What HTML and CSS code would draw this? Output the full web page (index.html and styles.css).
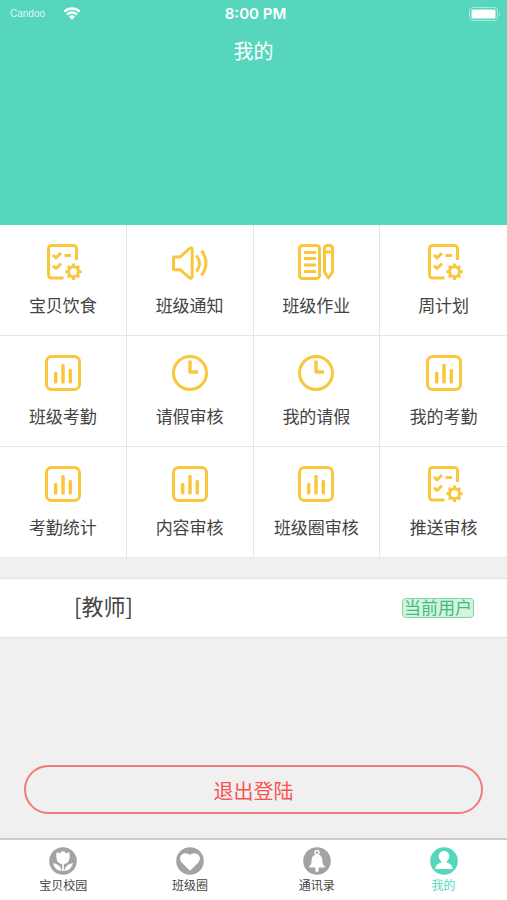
FILE: index.html
```html
<!DOCTYPE html>
<html lang="zh-CN">
<head>
<meta charset="utf-8">
<meta name="viewport" content="width=device-width, initial-scale=1">
<title>我的</title>
<link rel="stylesheet" href="styles.css">
</head>
<body>
<svg class="defs" aria-hidden="true">
  <symbol id="list-gear" viewBox="0 0 36 36">
    <path d="M18.500 34H6.500a3 3 0 0 1-3-3V4.500a3 3 0 0 1 3-3H28.500a3 3 0 0 1 3 3V16M8 11l3 2.800 5-4.800M19.500 11.500h6.500M8 21.700l3 2.800 5-4.800"/>
    <circle cx="28.500" cy="27.700" r="5"/>
    <path class="teeth" d="M28.500 21.700v-2.200M28.500 33.700v2.200M22.500 27.700h-2.200M34.500 27.700h2.200M24.300 23.500l-1.500-1.500M32.700 31.900l1.500 1.500M24.300 31.900l-1.500 1.500M32.700 23.500l1.500-1.500"/>
  </symbol>
  <symbol id="speaker" viewBox="0 0 36 36">
    <path d="M1.500 13.500q0-.5.500-.5H8L17 5q3.200-2.800 3.200 1V32q0 3.800-3.200 1.300L8 25.700H2q-.5 0-.5-.5zM24.300 11.500q6.500 8 0 16M29.500 6.500q9 12.500 0 25"/>
  </symbol>
  <symbol id="notebook" viewBox="0 0 36 36">
    <rect x="1.500" y="1.500" width="20" height="33" rx="3"/>
    <path d="M6 8.500h12M6 14.500h12M6 21h12M6 27.500h12M26.500 4.500q0-3 3-3h2q3 0 3 3V28l-4 6-4-6zM26.500 8h8"/>
  </symbol>
  <symbol id="chart" viewBox="0 0 36 36">
    <rect x="1.500" y="1.500" width="33" height="33" rx="5"/>
    <path class="bars" d="M10.700 18.500V27M18 10.500V27M25.300 15.500V27"/>
  </symbol>
  <symbol id="clock" viewBox="0 0 36 36">
    <circle cx="18" cy="18" r="16.500"/>
    <path class="hands" d="M18 5.500V17h8"/>
  </symbol>
</svg>

<header class="hero">
  <div class="status">
    <div class="signal">
      <span class="carrier">Candoo</span>
      <svg class="wifi" viewBox="0 0 18 13" aria-hidden="true">
        <path d="M1.200 4.500a11.500 11.500 0 0 1 15.600 0M4 7.500a7.300 7.300 0 0 1 10 0"/>
        <path class="dot" d="M6 9.600a4.500 4.500 0 0 1 6 0L9 12.700z"/>
      </svg>
    </div>
    <span class="time">8:00 PM</span>
    <svg class="battery" viewBox="0 0 32 14" aria-hidden="true">
      <rect class="shell" x="0.500" y="0.500" width="28" height="13" rx="3.500"/>
      <rect class="charge" x="2.500" y="2.500" width="24" height="9" rx="1.500"/>
      <path class="cap" d="M30 5q2 2 0 4z"/>
    </svg>
  </div>
  <h1 class="title">我的</h1>
</header>

<main class="main">
  <nav class="grid" aria-label="功能">
    <a class="cell" href="#"><svg class="icon"><use href="#list-gear"/></svg><span>宝贝饮食</span></a>
    <a class="cell" href="#"><svg class="icon"><use href="#speaker"/></svg><span>班级通知</span></a>
    <a class="cell" href="#"><svg class="icon"><use href="#notebook"/></svg><span>班级作业</span></a>
    <a class="cell" href="#"><svg class="icon"><use href="#list-gear"/></svg><span>周计划</span></a>
    <a class="cell" href="#"><svg class="icon"><use href="#chart"/></svg><span>班级考勤</span></a>
    <a class="cell" href="#"><svg class="icon"><use href="#clock"/></svg><span>请假审核</span></a>
    <a class="cell" href="#"><svg class="icon"><use href="#clock"/></svg><span>我的请假</span></a>
    <a class="cell" href="#"><svg class="icon"><use href="#chart"/></svg><span>我的考勤</span></a>
    <a class="cell" href="#"><svg class="icon"><use href="#chart"/></svg><span>考勤统计</span></a>
    <a class="cell" href="#"><svg class="icon"><use href="#chart"/></svg><span>内容审核</span></a>
    <a class="cell" href="#"><svg class="icon"><use href="#chart"/></svg><span>班级圈审核</span></a>
    <a class="cell" href="#"><svg class="icon"><use href="#list-gear"/></svg><span>推送审核</span></a>
  </nav>

  <section class="user">
    <span class="role">[教师]</span>
    <span class="tag">当前用户</span>
  </section>

  <button class="logout" type="button">退出登陆</button>
</main>

<nav class="tabs" aria-label="主导航">
  <a class="tab" href="#">
    <svg class="tab-icon" viewBox="0 0 28 28" aria-hidden="true">
      <circle cx="14" cy="14" r="13.800"/>
      <path class="cut" d="M7.500 5.500q2-.5 3.500 1Q12 4.200 14 4.200t3 2.300q1.500-1.500 3.500-1 .8 5.500-.7 8.500-1.500 2.800-5 3.200V24h-1.600v-6.800Q9.700 16.800 8.200 14 6.700 11 7.500 5.500zM4 16q7.300 1 8.800 8Q5.500 23.500 4 16zM24 16q-7.300 1-8.800 8Q22.500 23.500 24 16z"/>
    </svg>
    <span>宝贝校园</span>
  </a>
  <a class="tab" href="#">
    <svg class="tab-icon" viewBox="0 0 28 28" aria-hidden="true">
      <circle cx="14" cy="14" r="13.800"/>
      <path class="cut" d="M14 23.800L5.700 15.500C3 12.500 3.700 8.500 6.600 7c2.800-1.500 5.900-.7 7.400 1 1.500-1.700 4.600-2.500 7.400-1 2.900 1.500 3.600 5.500.9 8.500z"/>
    </svg>
    <span>班级圈</span>
  </a>
  <a class="tab" href="#">
    <svg class="tab-icon" viewBox="0 0 28 28" aria-hidden="true">
      <circle cx="14" cy="14" r="13.800"/>
      <circle class="ring" cx="14" cy="5.500" r="2"/>
      <path class="cut" d="M14 7.500c3.500 0 5.400 2.500 5.400 6 0 3 .7 4.500 2.300 5.500v1.500H6.300V19c1.600-1 2.300-2.500 2.300-5.500 0-3.500 1.900-6 5.400-6zM12.300 20.300h3.400v3.200q-.3 1.500-1.700 1.500t-1.700-1.500z"/>
    </svg>
    <span>通讯录</span>
  </a>
  <a class="tab active" href="#" aria-current="page">
    <svg class="tab-icon" viewBox="0 0 28 28" aria-hidden="true">
      <circle cx="14" cy="14" r="13.800"/>
      <path class="cut" d="M14 4c3.300 0 5.200 2.300 5.200 5.300 0 2.500-1.200 4-2.400 5v1.500c3.200.7 5.700 2.300 6 6.200H5.200c.3-3.900 2.800-5.500 6-6.200v-1.500c-1.200-1-2.400-2.500-2.400-5C8.800 6.300 10.700 4 14 4z"/>
    </svg>
    <span>我的</span>
  </a>
</nav>
</body>
</html>
```
FILE: styles.css
```css
* {
  box-sizing: border-box;
}

body {
  display: flex;
  flex-direction: column;
  min-height: 100vh;
  margin: 0;
  background: #f0f0f0;
  color: #444;
  font-family: "Liberation Sans", "Noto Sans CJK SC", sans-serif;
}

a {
  color: inherit;
  text-decoration: none;
}

.defs {
  position: absolute;
  width: 0;
  height: 0;
}

symbol {
  overflow: visible;
}

.hero {
  min-height: 225px;
  background: #57d6be;
  color: #fff;
}

.status {
  display: grid;
  grid-template-columns: 1fr auto 1fr;
  align-items: center;
  height: 27px;
  padding: 0 6px 0 10px;
}

.signal {
  display: flex;
  align-items: center;
  gap: 18px;
}

.carrier {
  font-size: 10px;
  opacity: 0.8;
}

.wifi {
  width: 18px;
  height: 13px;
  fill: none;
  stroke: #fff;
  stroke-width: 2.4;
}

.wifi .dot {
  fill: #fff;
  stroke: none;
}

.time {
  font-family: Inter, sans-serif;
  font-size: 15px;
  font-weight: 600;
}

.battery {
  justify-self: end;
  width: 32px;
  height: 14px;
  fill: #fff;
}

.battery .shell {
  fill: none;
  stroke: #fff;
  opacity: 0.5;
}

.battery .cap {
  opacity: 0.5;
}

.title {
  margin: 9px 0 0;
  font-size: 20px;
  font-weight: 400;
  line-height: 32px;
  text-align: center;
}

.main {
  display: flex;
  flex: 1;
  flex-direction: column;
}

.grid {
  display: grid;
  grid-template-columns: repeat(4, 1fr);
  background: #fff;
}

.cell {
  display: flex;
  flex-direction: column;
  align-items: center;
  gap: 15px;
  min-height: 111px;
  padding-top: 19px;
  border-right: 1px solid #e2e7ea;
  border-bottom: 1px solid #e2e7ea;
  font-size: 17px;
  line-height: 24px;
}

.cell:nth-child(4n) {
  border-right: 0;
}

.icon {
  width: 36px;
  height: 36px;
  overflow: visible;
  fill: none;
  stroke: #fac63c;
  stroke-width: 3;
  stroke-linejoin: round;
}

.bars {
  stroke-width: 3.5;
  stroke-linecap: round;
}

.hands {
  stroke-width: 3.4;
}

.user {
  display: flex;
  align-items: center;
  justify-content: space-between;
  min-height: 60px;
  margin-top: 20px;
  padding: 0 33px 0 74px;
  border-top: 1px solid #e2e5e7;
  border-bottom: 1px solid #e2e5e7;
  background: #fff;
}

.role {
  padding-bottom: 6px;
  font-family: "Noto Sans CJK SC", sans-serif;
  font-size: 22px;
  line-height: 32px;
}

.tag {
  padding: 1px 1px 0;
  border: 1px solid #7fd9a8;
  border-radius: 4px;
  background: #d5f3df;
  color: #3cbd7d;
  font-size: 17px;
  line-height: 17px;
}

.logout {
  height: 49px;
  margin: auto 24px 24px;
  padding: 2px 0 0;
  border: 2px solid #f07b78;
  border-radius: 25px;
  background: transparent;
  color: #f9534f;
  font-family: inherit;
  font-size: 20px;
}

.tabs {
  display: grid;
  grid-template-columns: repeat(4, 1fr);
  min-height: 62px;
  border-top: 2px solid #ccc;
  background: #fff;
}

.tab {
  display: flex;
  flex-direction: column;
  align-items: center;
  padding-top: 7px;
  font-size: 12px;
  line-height: 22px;
}

.tab-icon {
  width: 28px;
  height: 28px;
  fill: #a3a3a3;
}

.tab-icon .cut {
  fill: #fff;
}

.tab-icon .ring {
  fill: none;
  stroke: #fff;
  stroke-width: 1.3;
}

.active {
  color: #57d6be;
}

.active .tab-icon {
  fill: #57d6be;
}
```
